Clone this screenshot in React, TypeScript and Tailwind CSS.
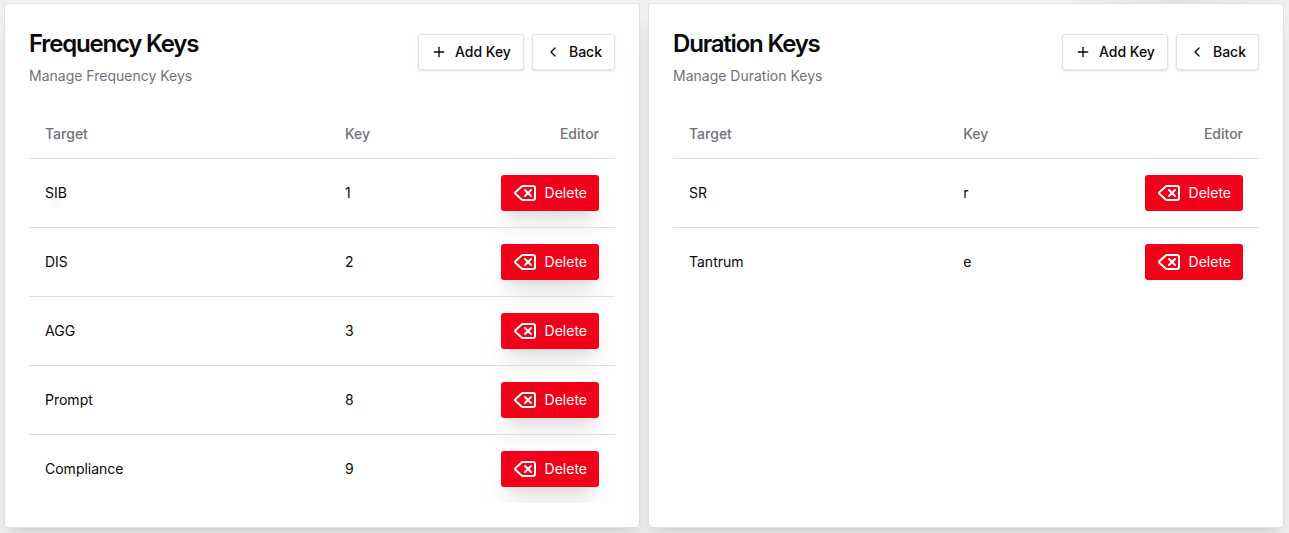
import { ChevronLeft, Delete, Plus } from "lucide-react";

type KeyRow = { target: string; key: string };

type PanelProps = {
  title: string;
  subtitle: string;
  rows: KeyRow[];
  raised?: boolean;
  targetWidth: string;
};

const outlineButton =
  "flex h-9 items-center rounded-[3px] border border-[#e2e2e4] bg-white px-3 text-sm font-medium text-[#09090b] shadow-sm";

function KeyPanel({ title, subtitle, rows, raised, targetWidth }: PanelProps) {
  return (
    <section className="flex-1 rounded-sm border border-[#dfdfe0] bg-white px-6 pt-[22px] pb-6 shadow-xl shadow-black/8">
      <header className="flex items-start justify-between">
        <div>
          <h2 className="text-2xl leading-9 font-semibold tracking-tighter">{title}</h2>
          <p className="mt-1 text-sm text-[#71717a]">{subtitle}</p>
        </div>
        <div className="mt-2 flex gap-2">
          <button type="button" className={outlineButton}>
            <Plus className="mr-2 size-4" />
            Add Key
          </button>
          <button type="button" className={outlineButton}>
            <ChevronLeft className="mr-2 size-4" />
            Back
          </button>
        </div>
      </header>
      <div className="mt-6 overflow-hidden">
        <table className="w-full table-fixed text-sm">
          <thead>
            <tr className="h-12 border-b border-[#dedee0] text-[#71717a]">
              <th scope="col" className={`px-4 text-left font-medium ${targetWidth}`}>Target</th>
              <th scope="col" className="px-4 text-left font-medium">Key</th>
              <th scope="col" className="w-36 px-4 text-right font-medium">Editor</th>
            </tr>
          </thead>
          <tbody>
            {rows.map((row) => (
              <tr key={row.target} className="border-b border-[#dedee0] last:border-0">
                <td className="p-4">{row.target}</td>
                <td className="p-4">{row.key}</td>
                <td className="p-4">
                  <button
                    type="button"
                    className={`ml-auto flex h-9 items-center gap-2 rounded-[3px] bg-[#f2001a] px-3 text-white ${raised ? "shadow-xl" : ""}`}
                  >
                    <Delete className="size-6" />
                    Delete
                  </button>
                </td>
              </tr>
            ))}
          </tbody>
        </table>
      </div>
    </section>
  );
}

const frequencyKeys: KeyRow[] = [
  { target: "SIB", key: "1" },
  { target: "DIS", key: "2" },
  { target: "AGG", key: "3" },
  { target: "Prompt", key: "8" },
  { target: "Compliance", key: "9" },
];

const durationKeys: KeyRow[] = [
  { target: "SR", key: "r" },
  { target: "Tantrum", key: "e" },
];

export default function App() {
  return (
    <main className="relative flex min-h-screen gap-2 bg-[#f0f0f0] pt-[3px] pr-[5px] pb-[5px] pl-1 font-['Inter',sans-serif] text-[#09090b]">
      <div
        aria-hidden="true"
        className="absolute top-0 right-0 h-[3px] w-56 bg-linear-to-r from-transparent via-[#e2e2e2] to-transparent"
      />
      <KeyPanel
        title="Frequency Keys"
        subtitle="Manage Frequency Keys"
        rows={frequencyKeys}
        targetWidth="w-[51.2%]"
        raised
      />
      <KeyPanel
        title="Duration Keys"
        subtitle="Manage Duration Keys"
        rows={durationKeys}
        targetWidth="w-[46.8%]"
      />
    </main>
  );
}
